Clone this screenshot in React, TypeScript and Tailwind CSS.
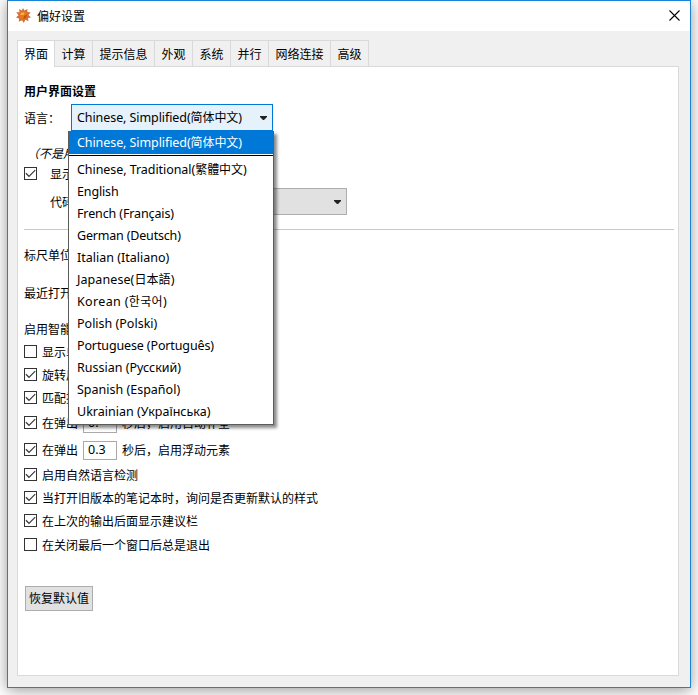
import type { ReactNode } from "react";

const tabs = [
  { label: "计算", w: "w-[38px]" },
  { label: "提示信息", w: "w-[62px]" },
  { label: "外观", w: "w-[38px]" },
  { label: "系统", w: "w-[38px]" },
  { label: "并行", w: "w-[38px]" },
  { label: "网络连接", w: "w-[62px]" },
  { label: "高级", w: "w-[39px] border-r" },
];

const languages: { latin: string; rest?: string; tracking?: string }[] = [
  { latin: "Chinese, Traditional(", rest: "繁體中文", tracking: "tracking-[-0.06px]" },
  { latin: "English", tracking: "tracking-[-0.15px]" },
  { latin: "French (Français)", tracking: "tracking-[-0.12px]" },
  { latin: "German (Deutsch)", tracking: "tracking-[-0.18px]" },
  { latin: "Italian (Italiano)" },
  { latin: "Japanese(", rest: "日本語", tracking: "tracking-[0.08px]" },
  { latin: "Korean (", rest: "한국어", tracking: "tracking-[0.35px]" },
  { latin: "Polish (Polski)" },
  { latin: "Portuguese (Português)", tracking: "tracking-[-0.13px]" },
  { latin: "Russian (Русский)" },
  { latin: "Spanish (Español)" },
  { latin: "Ukrainian (Українська)" },
];

function LanguageName({ latin, rest, tracking = "" }: { latin: string; rest?: string; tracking?: string }) {
  return (
    <span className={`whitespace-pre font-['Noto_Sans','Noto_Sans_CJK_SC',sans-serif] text-[12.5px] ${tracking}`}>
      {latin}
      {rest && <span className="text-[12px]">{rest}</span>}
      {rest && ")"}
    </span>
  );
}

function Arrow() {
  return (
    <svg width="7" height="4" viewBox="0 0 7 4" className="shrink-0">
      <path d="M0 0H7V1L4 4H3L0 1Z" fill="#222" />
    </svg>
  );
}

function Check({ on = true }: { on?: boolean }) {
  return (
    <span className="flex size-[13px] shrink-0 items-center justify-center border border-[#333] bg-white">
      {on && (
        <svg width="11" height="11" viewBox="0 0 11 11">
          <path d="M.9 5.3L4 8.3L10.2 2.1" fill="none" stroke="#3a3a3a" strokeWidth="1.2" />
        </svg>
      )}
    </span>
  );
}

function Option({ on = true, h = "h-[23px]", children }: { on?: boolean; h?: string; children: ReactNode }) {
  return (
    <div className={`flex items-center gap-[5px] ${h}`}>
      <Check on={on} />
      <div className="flex items-center pt-px">{children}</div>
    </div>
  );
}

function Seconds({ value, after }: { value: string; after: string }) {
  return (
    <>
      <span>在弹出</span>
      <span className="mx-[5px] flex h-[19px] w-[34px] items-center border border-[#a9a9a9] pl-1 font-['Noto_Sans',sans-serif] text-[12.5px]">
        {value}
      </span>
      <span>{after}</span>
    </>
  );
}

function LanguageMenu() {
  return (
    <div className="absolute left-[-3px] top-[27px] h-[294px] w-[206px] border border-t-0 border-[#5c5c5c] bg-white shadow-[3px_3px_3px_rgba(0,0,0,0.45)]">
      <div className="flex h-[23px] items-center bg-[#0078d7] pl-2 pt-[2px] text-white">
        <LanguageName latin="Chinese, Simplified(" rest="简体中文" tracking="tracking-[-0.08px]" />
      </div>
      <div className="mb-[3px] mt-px h-px bg-black" />
      {languages.map((l) => (
        <div key={l.latin} className="flex h-[22px] items-center pl-2">
          <LanguageName {...l} />
        </div>
      ))}
    </div>
  );
}

export default function App() {
  return (
    <div className="h-[695px] w-[698px] overflow-hidden bg-white pl-[7px] font-['Noto_Sans_CJK_SC',sans-serif] text-[12px] leading-none text-black">
      <div className="flex h-[688px] w-[684px] flex-col border border-[#1883d7] bg-[#f0f0f0] shadow-[0_2px_14px_rgba(0,0,0,0.42)]">
        <div className="flex h-[30px] shrink-0 items-center bg-white pl-[8px] pr-[10px]">
          <svg width="15" height="15" viewBox="0 0 15 15" className="-mt-px">
            <path
              d="M7 0L8.4 2.5L11.5 .9L11.2 3.7L14.6 4.5L12.5 7L15 9.5L12 9.9L12.4 13.2L9.4 11.8L7.8 15L6 12.2L2.8 13.8L3.2 10.5L0 9.4L2.5 7.2L.3 4.3L3.6 4.2L3 .9L5.8 2.5Z"
              fill="#d0703a"
            />
            <path d="M5 3.6L9 3.2L11.6 5.8L10.8 9.6L7.4 11.5L4 9.4L3.3 6Z" fill="#e87818" />
            <path d="M5.5 4.4L8.8 4.8L7.4 7L4.2 7Z" fill="#ffb04a" />
            <path d="M8 8L11 6.5L10 9.7L7.4 11Z" fill="#b85416" />
          </svg>
          <span className="-mt-px ml-[6px]">偏好设置</span>
          <svg width="11" height="11" viewBox="0 0 11 11" className="-mt-px ml-auto">
            <path d="M.5 .5L10.5 10.5M10.5 .5L.5 10.5" stroke="#000" strokeWidth="1.1" />
          </svg>
        </div>

        <div className="ml-[9px] mt-[9px] flex h-[26px] shrink-0">
          <div className="z-10 -mb-px flex h-[27px] w-[37px] items-center justify-center border-l border-t border-[#d9d9d9] bg-white">
            界面
          </div>
          {tabs.map((t) => (
            <div
              key={t.label}
              className={`flex items-center justify-center border-l border-t border-[#d9d9d9] ${t.w}`}
            >
              {t.label}
            </div>
          ))}
        </div>

        <div className="ml-[9px] h-[610px] w-[662px] shrink-0 border border-[#d9d9d9] bg-white pl-[6px] pr-1 pt-3">
          <div className="flex h-6 items-center pb-px font-bold">用户界面设置</div>
          <div className="mt-px flex h-[27px] items-center">
            <span className="w-[47px]">语言：</span>
            <div className="relative z-20 flex h-[27px] w-[202px] items-center justify-between border border-[#0078d7] bg-[#e5f1fb] px-[5px] pt-px">
              <LanguageName latin="Chinese, Simplified(" rest="简体中文" tracking="tracking-[-0.08px]" />
              <Arrow />
              <div className="absolute -left-px -top-px">
                <LanguageMenu />
              </div>
            </div>
          </div>
          <div className="mt-[10px] flex h-6 items-center pl-[3px] italic">（不是用</div>
          <div className="flex h-[17px] items-center gap-[13px]">
            <Check />
            <span>显示</span>
          </div>
          <div className="mt-[6px] flex h-[27px] items-center pl-[26px]">
            <span className="w-[97px]">代码</span>
            <div className="flex h-[27px] w-[200px] items-center justify-end border border-[#adadad] bg-[#e1e1e1] pr-[5px]">
              <Arrow />
            </div>
          </div>
          <div className="mt-[14px] h-px bg-[#c8c8c8]" />
          <div className="mt-[13px] flex h-6 items-center">标尺单位</div>
          <div className="mt-[14px] flex h-6 items-center">最近打开</div>
          <div className="mt-3 flex h-[23px] items-center">启用智能</div>
          <Option on={false}>显示单</Option>
          <Option>旋转后</Option>
          <Option>匹配括</Option>
          <Option h="h-[27px]">
            <Seconds value="0." after="秒后，启用自动补全" />
          </Option>
          <Option h="h-[27px]">
            <Seconds value="0.3" after="秒后，启用浮动元素" />
          </Option>
          <Option>启用自然语言检测</Option>
          <Option>当打开旧版本的笔记本时，询问是否更新默认的样式</Option>
          <Option>在上次的输出后面显示建议栏</Option>
          <Option on={false} h="h-[25px]">
            在关闭最后一个窗口后总是退出
          </Option>
          <button className="ml-px mt-[29px] flex h-[25px] w-[68px] items-center justify-center border border-[#adadad] bg-[#e1e1e1] pb-px">
            恢复默认值
          </button>
        </div>
      </div>
    </div>
  );
}
